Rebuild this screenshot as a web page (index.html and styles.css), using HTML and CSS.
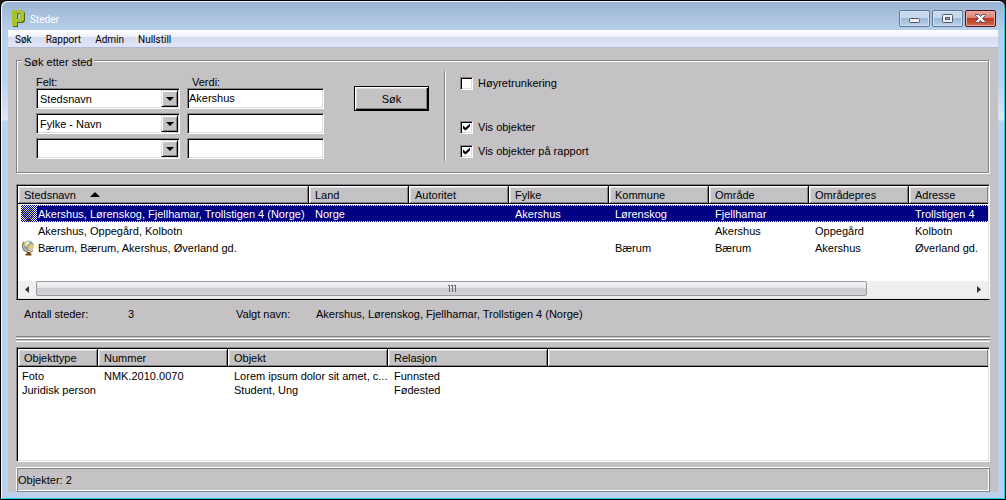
FILE: index.html
```html
<!DOCTYPE html>
<html lang="no">
<head>
<meta charset="utf-8">
<title>Steder</title>
<link rel="stylesheet" href="styles.css">
</head>
<body>
<div class="window">
  <header class="titlebar">
    <svg class="logo" width="13" height="17" viewBox="0 0 13 17" aria-hidden="true">
      <path fill="#56641f" fill-rule="evenodd" d="M1 1H5V3H7V1H11L13 3V11L11 13H6V17H1ZM6 4V10H8V4Z"/>
      <path fill="#a9c32e" fill-rule="evenodd" d="M0 0H4V2L6 0H10L12 2V10L10 12H5V16H0ZM5 4V9H8V3H6Z"/>
    </svg>
    <h1 class="title">Steder</h1>
    <div class="caption-buttons">
      <button class="caption" type="button" aria-label="Minimer">
        <svg width="11" height="9" viewBox="0 0 11 9"><rect x="0.5" y="4.5" width="10" height="4" rx="1" fill="#f2f2f2" stroke="#535666"/></svg>
      </button>
      <button class="caption" type="button" aria-label="Maksimer">
        <svg width="11" height="9" viewBox="0 0 11 9"><rect x="0.5" y="0.5" width="10" height="8" rx="1" fill="#f2f2f2" stroke="#535666"/><rect x="3.5" y="3.5" width="4" height="2" fill="#9bb8dc" stroke="#535666"/></svg>
      </button>
      <button class="caption caption-close" type="button" aria-label="Lukk">
        <svg width="11" height="9" viewBox="0 0 11 9"><path d="M0.5 0.5H3.5L5.5 2.3L7.5 0.5H10.5V1.5L7.6 4.5L10.5 7.5V8.5H7.5L5.5 6.7L3.5 8.5H0.5V7.5L3.4 4.5L0.5 1.5Z" fill="#f6f6f6" stroke="#535666"/></svg>
      </button>
    </div>
  </header>
  <div class="client">
    <nav class="menubar">
      <button class="menu" type="button">Søk</button>
      <button class="menu" type="button">Rapport</button>
      <button class="menu" type="button">Admin</button>
      <button class="menu" type="button">Nullstill</button>
    </nav>
    <main class="content">
      <fieldset class="search">
        <legend class="legend">Søk etter sted</legend>
        <div class="search-body">
          <div class="criteria">
            <span id="felt">Felt:</span>
            <span class="value-label" id="verdi">Verdi:</span>
            <div class="combo"><select class="field" aria-labelledby="felt"><option>Stedsnavn</option></select><span class="arrow"></span></div>
            <input class="field" type="text" value="Akershus" aria-labelledby="verdi">
            <div class="combo"><select class="field" aria-labelledby="felt"><option>Fylke - Navn</option></select><span class="arrow"></span></div>
            <input class="field" type="text" aria-labelledby="verdi">
            <div class="combo"><select class="field" aria-labelledby="felt"><option></option></select><span class="arrow"></span></div>
            <input class="field" type="text" aria-labelledby="verdi">
          </div>
          <button class="search-button" type="submit">Søk</button>
          <div class="options">
            <label class="option option-first"><input class="check" type="checkbox">Høyretrunkering</label>
            <label class="option"><input class="check" type="checkbox" checked>Vis objekter</label>
            <label class="option"><input class="check" type="checkbox" checked>Vis objekter på rapport</label>
          </div>
        </div>
      </fieldset>

      <section class="list places">
        <table class="grid">
          <colgroup><col class="c-name"><col class="c-std"><col class="c-std"><col class="c-std"><col class="c-std"><col class="c-std"><col class="c-std"><col></colgroup>
          <thead>
            <tr><th>Stedsnavn<svg class="sort" width="10" height="5" viewBox="0 0 10 5" aria-hidden="true"><path d="M5 0L10 5H0Z"/></svg></th><th>Land</th><th>Autoritet</th><th>Fylke</th><th>Kommune</th><th>Område</th><th>Områdepres</th><th>Adresse</th></tr>
          </thead>
          <tbody>
            <tr class="selected">
              <td><span class="place"><svg class="globe" width="16" height="16" viewBox="0 0 16 16" aria-hidden="true"><defs><pattern id="dither" width="2" height="2" patternUnits="userSpaceOnUse"><path fill="#000084" d="M0 0H1V1H0ZM1 1H2V2H1Z"/></pattern></defs><rect width="16" height="16" fill="#fff"/><use href="#globe"/><rect width="16" height="16" fill="url(#dither)"/></svg><span class="place-name">Akershus, Lørenskog, Fjellhamar, Trollstigen 4 (Norge)</span></span></td>
              <td>Norge</td><td></td><td>Akershus</td><td>Lørenskog</td><td>Fjellhamar</td><td></td><td>Trollstigen 4</td>
            </tr>
            <tr>
              <td><span class="place"><span class="globe"></span><span class="place-name">Akershus, Oppegård, Kolbotn</span></span></td>
              <td></td><td></td><td></td><td></td><td>Akershus</td><td>Oppegård</td><td>Kolbotn</td>
            </tr>
            <tr>
              <td><span class="place"><svg class="globe" width="16" height="16" viewBox="0 0 16 16" aria-hidden="true">
                <g id="globe">
                  <path d="M3 2C0.8 4.5 1 9 4 11C7 13 10.5 12.5 12 10.5" fill="none" stroke="#9a6a34" stroke-width="1.2"/>
                  <circle cx="7.5" cy="5.8" r="5.2" fill="#7fa3b8"/>
                  <path d="M3 4.5L5.5 1.5L9 1L8.5 4L6.5 5.5L4.5 7ZM7.5 6L11 3.5L12.5 6L11.5 9L8.5 10.5L7 8Z" fill="#ecc872"/>
                  <path d="M5 2L8 1.5L7.5 4L4.5 5Z" fill="#f8f0cf"/>
                  <path d="M6 12H9V13L10.5 14V15.5H4.5V14L6 13.5Z" fill="#744719"/>
                </g></svg><span class="place-name">Bærum, Bærum, Akershus, Øverland gd.</span></span></td>
              <td></td><td></td><td></td><td>Bærum</td><td>Bærum</td><td>Akershus</td><td>Øverland gd.</td>
            </tr>
          </tbody>
        </table>
        <div class="scrollbar">
          <button class="scroll-button" type="button" aria-label="Rull til venstre"><svg width="4" height="7" viewBox="0 0 4 7"><path d="M4 0V7L0 3.5Z" fill="#333"/></svg></button>
          <div class="track"><div class="thumb"><svg width="8" height="7" viewBox="0 0 8 7"><path d="M0 0H2V7H1V1H0ZM3 0H5V7H4V1H3ZM6 0H8V7H7V1H6Z" fill="#66666b"/></svg></div></div>
          <button class="scroll-button" type="button" aria-label="Rull til høyre"><svg width="4" height="7" viewBox="0 0 4 7"><path d="M0 0V7L4 3.5Z" fill="#333"/></svg></button>
        </div>
      </section>

      <div class="summary">
        <span class="sum-label">Antall steder:</span><span class="sum-count">3</span><span class="sum-name">Valgt navn:</span><span>Akershus, Lørenskog, Fjellhamar, Trollstigen 4 (Norge)</span>
      </div>
      <div class="splitter"></div>

      <section class="list objects">
        <table class="grid grid-objects">
          <colgroup><col class="c-type"><col class="c-number"><col class="c-object"><col class="c-relation"><col></colgroup>
          <thead><tr><th>Objekttype</th><th>Nummer</th><th>Objekt</th><th>Relasjon</th><th></th></tr></thead>
          <tbody>
            <tr><td>Foto</td><td>NMK.2010.0070</td><td>Lorem ipsum dolor sit amet, c...</td><td>Funnsted</td><td></td></tr>
            <tr><td>Juridisk person</td><td></td><td>Student, Ung</td><td>Fødested</td><td></td></tr>
          </tbody>
        </table>
      </section>
      <footer class="status">Objekter: 2</footer>
    </main>
  </div>
</div>
</body>
</html>
```
FILE: styles.css
```css
* { box-sizing: border-box; }

body {
  margin: 0;
  background: #1b1b1b;
  color: #000;
  font: 11px/14px "Liberation Sans", Arial, sans-serif;
}

button, input, select { font: inherit; color: inherit; }

.window {
  display: flex;
  flex-direction: column;
  min-height: 100vh;
  padding: 0 6px 7px;
  border: 1px solid #000;
  border-radius: 7px 7px 0 0;
  background: linear-gradient(#99b3d2, #b9d0eb 30px, #bdd1ee 80px, #dde8f6 119px, #bdd1ef 120px);
  box-shadow: inset 1px 1px #f4f8fd, inset -1px -1px #20cde6;
}

.titlebar {
  display: flex;
  align-items: flex-start;
  height: 29px;
  padding: 9px 3px 0 5px;
}
.logo { flex: none; }
.title {
  flex: 1;
  margin: 2px 0 0 5px;
  color: #fff;
  font: 10px/16px Roboto, sans-serif;
}
.caption-buttons { display: flex; gap: 2px; }
.caption {
  display: flex;
  align-items: center;
  justify-content: center;
  width: 31px;
  height: 17px;
  padding: 0;
  border: 1px solid #5f7596;
  border-radius: 2px;
  background: linear-gradient(#c5d8ee 50%, #9db9d8 50%, #b9d2ec);
  box-shadow: inset 0 0 0 1px #d5e3f4;
}
.caption-close {
  border-color: #4a1020;
  background: linear-gradient(#e7a397, #d98473 50%, #bb3a20 50%, #d4674d);
  box-shadow: inset 0 0 0 1px #e9aaa0;
}

.client {
  display: flex;
  flex: 1;
  flex-direction: column;
  margin: 0 1px;
  background: #c5c2c5;
}
.menubar {
  display: flex;
  gap: 14px;
  height: 18px;
  padding: 0 7px;
  border-bottom: 1px solid #b0bad0;
  background: linear-gradient(#fff, #eef0f9 7px, #d6dbef 7px, #e2e5f8 17px);
}
.menu {
  padding: 1px 0 0;
  border: 0;
  background: none;
  font: 10px/18px Roboto, sans-serif;
}

.content {
  display: flex;
  flex: 1;
  flex-direction: column;
  padding: 7px 8px 0;
}

.search {
  min-width: 0;
  height: 118px;
  margin: 0 1px 0 0;
  padding: 0 17px;
  border: 1px solid #848284;
  box-shadow: inset 1px 1px #fff, 1px 1px #fff;
}
.legend {
  height: 10px;
  margin-left: -12px;
  padding: 0 2px;
  background: #c5c2c5;
}
.search-body { display: flex; align-items: flex-start; padding: 5px 0 0 2px; }
.criteria {
  display: grid;
  grid-template-columns: 144px 137px;
  gap: 4px 7px;
  margin-top: 5px;
}
.criteria > span { height: 9px; }
.value-label { padding-left: 5px; }
.field {
  display: block;
  width: 100%;
  height: 21px;
  margin: 0;
  padding: 0 1px 2px;
  border: 1px solid;
  border-color: #848284 #fff #fff #848284;
  border-radius: 0;
  outline: 0;
  background: #fff;
  box-shadow: inset 1px 1px #000, inset -1px -1px #dedfde;
  appearance: none;
}
select.field { padding: 0 3px; }
.combo { position: relative; }
.arrow {
  position: absolute;
  top: 2px;
  right: 2px;
  display: grid;
  place-items: center;
  width: 17px;
  height: 17px;
  border: 1px solid;
  border-color: #dedfde #000 #000 #dedfde;
  background: #c5c2c5;
  box-shadow: inset 1px 1px #fff, inset -1px -1px #848284;
  pointer-events: none;
}
.arrow::before {
  content: "";
  border: solid transparent;
  border-width: 4px 4px 0;
  border-top-color: #000;
}
.search-button {
  width: 75px;
  height: 25px;
  margin: 16px 15px 0 30px;
  padding: 0;
  border: 1px solid #000;
  background: #c5c2c5;
  box-shadow: inset 1px 1px #fff, inset -1px -1px #000, inset -2px -2px #848284, inset 2px 2px #dedfde;
}
.options {
  display: flex;
  flex-direction: column;
  gap: 10px;
  height: 90px;
  margin-top: 1px;
  padding: 5px 0 0 15px;
  border-left: 1px solid #848284;
  box-shadow: inset 1px 0 #fff;
}
.option { display: flex; align-items: center; gap: 5px; }
.option-first { margin-bottom: 20px; }
.check {
  display: grid;
  place-items: center;
  width: 13px;
  height: 13px;
  margin: 0;
  border: 1px solid;
  border-color: #848284 #fff #fff #848284;
  background: #fff;
  box-shadow: inset 1px 1px #000, inset -1px -1px #dedfde;
  appearance: none;
}
.check:checked::before {
  content: "";
  width: 7px;
  height: 7px;
  background: #000;
  clip-path: polygon(0 29%, 36% 60%, 100% 0, 100% 43%, 36% 100%, 0 71%);
}

.list {
  padding: 1px;
  border: 1px solid;
  border-color: #848284 #fff #fff #848284;
  background: #fff;
  box-shadow: inset 1px 1px #000, inset -1px -1px #dedfde;
}
.places { margin-top: 11px; border-bottom-color: #000; }
.grid {
  width: 100%;
  table-layout: fixed;
  border-collapse: separate;
  border-spacing: 0;
}
.c-name { width: 291px; }
.c-std { width: 100px; }
.c-type { width: 80px; }
.c-number { width: 130px; }
.c-object { width: 160px; }
.c-relation { width: 160px; }
.grid th {
  height: 18px;
  padding: 1px 6px 0;
  border: solid #000;
  border-width: 0 1px 1px 0;
  background: #c5c2c5;
  box-shadow: inset 1px 1px #fff, inset -1px -1px #848284, inset 2px 2px #dedfde;
  font-weight: 400;
  text-align: left;
  white-space: nowrap;
}
.grid th:last-child { border-right: 0; }
.sort { margin: 0 0 2px 14px; }
.grid td { height: 17px; padding: 0 6px; overflow: hidden; white-space: nowrap; }
.grid td:first-child { padding: 0 3px; }
.grid tbody::before { content: ""; display: block; height: 1px; }
.place { display: flex; align-items: center; gap: 1px; }
.globe { flex: none; width: 16px; }
.selected td {
  background-color: #000084;
  background-image:
    repeating-linear-gradient(90deg, #ffff7b 0 1px, #000084 1px 2px),
    repeating-linear-gradient(90deg, #ffff7b 0 1px, #000084 1px 2px);
  background-position: 0 0, 0 100%;
  background-repeat: no-repeat;
  background-size: 100% 1px;
  color: #fff;
}
.selected td:first-child {
  padding-right: 0;
  background-clip: content-box;
  background-origin: content-box;
}
.grid-objects td { height: 14px; }
.grid-objects td:first-child { padding: 0 4px; }
.grid-objects tbody::before { height: 2px; }

.scrollbar {
  display: flex;
  height: 17px;
  margin-top: 25px;
  background: #f0eff0;
}
.scroll-button {
  display: grid;
  place-items: center;
  width: 18px;
  padding: 0;
  border: 0;
  background: none;
}
.track { flex: 1; }
.thumb {
  display: grid;
  place-items: center;
  width: 89%;
  height: 15px;
  border: 1px solid #98989c;
  border-radius: 2px;
  background: linear-gradient(#f5f4f6, #e6e6ea 45%, #cbccd2 50%, #d2d3d8);
}

.summary { display: flex; padding: 7px 8px 0; }
.sum-label { width: 104px; }
.sum-count { width: 108px; }
.sum-name { width: 80px; }
.splitter {
  height: 6px;
  margin-top: 15px;
  background: linear-gradient(#848284 1px, #c5c2c5 1px 2px, #fff 2px 3px, #848284 3px 4px, #c5c2c5 4px 5px, #fff 5px);
}
.objects { flex: 1; margin-top: 5px; }
.status {
  height: 25px;
  margin-top: 5px;
  padding: 5px 1px;
  border: 1px solid;
  border-color: #fff #848284 #848284 #fff;
  box-shadow: inset 1px 1px #848284, inset -1px -1px #fff;
}
```
